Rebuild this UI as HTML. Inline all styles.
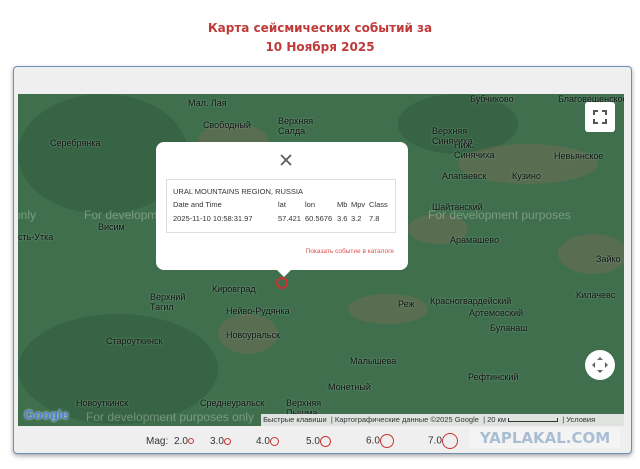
<!DOCTYPE html>
<html><head><meta charset="utf-8"><style>
body{margin:0;width:640px;height:469px;background:#fff;font-family:"Liberation Sans",sans-serif;position:relative;overflow:hidden}
.t{position:absolute;left:0;width:640px;text-align:center;color:#c03a3a;font-weight:bold;font-size:12px;line-height:19px;top:19px;font-family:"DejaVu Sans",sans-serif}
.box{position:absolute;left:13px;top:66px;width:617px;height:386px;border:1px solid #6d8fb5;border-radius:4px;background:#efefef;box-shadow:0 2px 5px rgba(0,0,0,.35)}
.map{position:absolute;left:18px;top:94px;width:606px;height:332px;background:#3f6f4d;overflow:hidden}
.l{position:absolute;font-size:9px;color:#111;white-space:nowrap;text-shadow:0 0 2px #8ab09a}
.dev{position:absolute;font-size:12px;color:rgba(255,255,255,.3);white-space:nowrap}
.blob{position:absolute;background:#8a6a58;border-radius:50%;opacity:.35}
.dk{position:absolute;background:#2f5a3c;border-radius:50%;opacity:.5}
.pop{position:absolute;left:156px;top:142px;width:252px;height:128px;background:#fff;border-radius:8px}
.tb{position:absolute;left:10px;top:37px;width:228px;height:52px;border:1px solid #ddd;font-size:7.5px;color:#333}
.btn{position:absolute;background:#fff;border-radius:3px}
.leg{position:absolute;top:436px;font-size:10px;color:#333}
.c{display:inline-block;border:1.5px solid #c33;border-radius:50%;vertical-align:middle}
</style></head><body>
<div class="t">Карта сейсмических событий за<br>10 Ноября 2025</div>
<div class="box"></div>
<div class="map">
<div class="dk" style="left:0px;top:0px;width:170px;height:120px"></div>
<div class="dk" style="left:0px;top:220px;width:200px;height:110px"></div>
<div class="dk" style="left:380px;top:0px;width:120px;height:60px"></div>
<div class="blob" style="left:180px;top:30px;width:70px;height:30px"></div>
<div class="blob" style="left:440px;top:50px;width:140px;height:40px"></div>
<div class="blob" style="left:390px;top:120px;width:60px;height:30px"></div>
<div class="blob" style="left:330px;top:200px;width:80px;height:30px"></div>
<div class="blob" style="left:200px;top:220px;width:60px;height:40px"></div>
<div class="blob" style="left:540px;top:140px;width:70px;height:40px"></div>
<div class="l" style="left:170px;top:4px">Мал. Лая</div>
<div class="l" style="left:452px;top:0px">Бубчиково</div>
<div class="l" style="left:540px;top:0px">Благовещенское</div>
<div class="l" style="left:185px;top:26px">Свободный</div>
<div class="l" style="left:260px;top:22px">Верхняя<br>Салда</div>
<div class="l" style="left:32px;top:44px">Серебрянка</div>
<div class="l" style="left:414px;top:32px">Верхняя<br>Синячиха</div>
<div class="l" style="left:436px;top:46px">Ниж.<br>Синячиха</div>
<div class="l" style="left:536px;top:57px">Невьянское</div>
<div class="l" style="left:424px;top:77px">Алапаевск</div>
<div class="l" style="left:494px;top:77px">Кузино</div>
<div class="l" style="left:414px;top:108px">Шайтанский</div>
<div class="l" style="left:80px;top:128px">Висим</div>
<div class="l" style="left:0px;top:138px">сть-Утка</div>
<div class="l" style="left:432px;top:141px">Арамашево</div>
<div class="l" style="left:578px;top:160px">Зайко</div>
<div class="l" style="left:194px;top:190px">Кировград</div>
<div class="l" style="left:132px;top:198px">Верхний<br>Тагил</div>
<div class="l" style="left:412px;top:202px">Красногвардейский</div>
<div class="l" style="left:451px;top:214px">Артемовский</div>
<div class="l" style="left:380px;top:205px">Реж</div>
<div class="l" style="left:558px;top:196px">Килачевс</div>
<div class="l" style="left:208px;top:212px">Нейво-Рудянка</div>
<div class="l" style="left:472px;top:229px">Буланаш</div>
<div class="l" style="left:208px;top:236px">Новоуральск</div>
<div class="l" style="left:88px;top:242px">Староуткинск</div>
<div class="l" style="left:332px;top:262px">Малышева</div>
<div class="l" style="left:450px;top:278px">Рефтинский</div>
<div class="l" style="left:310px;top:288px">Монетный</div>
<div class="l" style="left:58px;top:304px">Новоуткинск</div>
<div class="l" style="left:182px;top:304px">Среднеуральск</div>
<div class="l" style="left:268px;top:304px">Верхняя<br>Пышма</div>
<div class="dev" style="left:-20px;top:114px">es only</div>
<div class="dev" style="left:66px;top:114px">For development purposes only</div>
<div class="dev" style="left:410px;top:114px">For development purposes</div>
<div class="dev" style="left:68px;top:316px">For development purposes only</div>
<div style="position:absolute;left:6px;top:313px;font-size:13px;font-weight:bold;color:#4a7fd8;text-shadow:0 0 2px #fff">Google</div>
<div style="position:absolute;left:258px;top:183px;width:8px;height:8px;border:2px solid #c33;border-radius:50%"></div>
<div style="position:absolute;left:243px;top:320px;width:363px;height:12px;background:rgba(240,240,240,.9);font-size:7.5px;color:#333;line-height:12px;white-space:nowrap">&nbsp;Быстрые клавиши &nbsp;| Картографические данные ©2025 Google &nbsp;| 20 км <span style="display:inline-block;width:48px;height:3px;border:1px solid #333;border-top:0"></span> &nbsp;| Условия</div>
<div class="btn" style="left:567px;top:8px;width:30px;height:30px"><svg width="30" height="30"><path d="M9 13V9h4M17 9h4v4M21 17v4h-4M13 21H9v-4" stroke="#555" stroke-width="2" fill="none"/></svg></div>
<div class="btn" style="left:567px;top:256px;width:30px;height:30px;border-radius:50%"><svg width="30" height="30"><path d="M15 7l-3 3h6zM15 23l-3-3h6zM7 15l3-3v6zM23 15l-3-3v6z" fill="#666"/></svg></div>
</div>
<div class="pop">
<svg style="position:absolute;left:124px;top:12px" width="12" height="12"><path d="M1 1L11 11M11 1L1 11" stroke="#555" stroke-width="1.6"/></svg>
<div class="tb">
<div style="position:absolute;left:6px;top:7px">URAL MOUNTAINS REGION, RUSSIA</div>
<div style="position:absolute;left:6px;top:20px">Date and Time</div>
<div style="position:absolute;left:6px;top:34px">2025-11-10 10:58:31.97</div>
<div style="position:absolute;left:111px;top:20px">lat</div><div style="position:absolute;left:111px;top:34px">57.421</div>
<div style="position:absolute;left:138px;top:20px">lon</div><div style="position:absolute;left:138px;top:34px">60.5676</div>
<div style="position:absolute;left:170px;top:20px">Mb</div><div style="position:absolute;left:170px;top:34px">3.6</div>
<div style="position:absolute;left:184px;top:20px">Mpv</div><div style="position:absolute;left:184px;top:34px">3.2</div>
<div style="position:absolute;left:202px;top:20px">Class</div><div style="position:absolute;left:202px;top:34px">7.8</div>
</div>
<div style="position:absolute;right:14px;top:106px;font-size:6.5px;color:#e05050">Показать событие в каталоге</div>
<div style="position:absolute;left:120px;top:127px;width:0;height:0;border-left:8px solid transparent;border-right:8px solid transparent;border-top:8px solid #fff"></div>
</div>
<div class="leg" style="left:146px">Mag:</div>
<div class="leg" style="left:174px">2.0<span class="c" style="width:4px;height:4px"></span></div>
<div class="leg" style="left:210px">3.0<span class="c" style="width:5px;height:5px"></span></div>
<div class="leg" style="left:256px">4.0<span class="c" style="width:7px;height:7px"></span></div>
<div class="leg" style="left:306px">5.0<span class="c" style="width:9px;height:9px"></span></div>
<div class="leg" style="left:366px;top:434px">6.0<span class="c" style="width:12px;height:12px"></span></div>
<div class="leg" style="left:428px;top:433px">7.0<span class="c" style="width:14px;height:14px"></span></div>
<div style="position:absolute;left:470px;top:428px;width:150px;height:20px;background:#f4f4f4;color:#a9bdd3;font-weight:bold;font-size:15px;line-height:20px;text-align:center;font-family:'DejaVu Sans',sans-serif">YAPLAKAL.COM</div>
</body></html>
